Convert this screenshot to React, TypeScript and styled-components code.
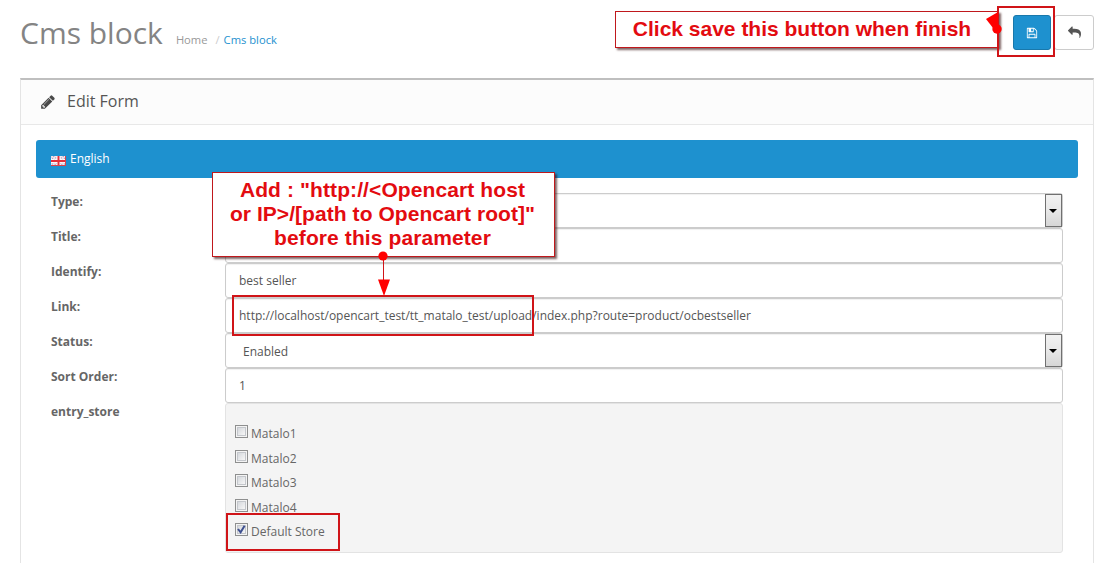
import React from 'react';
import styled, { createGlobalStyle } from 'styled-components';

const GlobalStyle = createGlobalStyle`
  * { box-sizing: border-box; }
  body { margin: 0; overflow: hidden; background: #fff; }
`;

const Page = styled.div`
  position: relative;
  height: 563px;
  overflow: hidden;
  padding: 0 9px 0 20px;
  font: 12px/17px 'Open Sans', sans-serif;
  color: #666;
`;

const PageHeader = styled.header`
  display: flex;
  align-items: flex-start;
  justify-content: space-between;
  height: 78px;
`;

const Heading = styled.div`
  display: flex;
  align-items: baseline;
  padding-top: 13px;
`;

const Title = styled.h1`
  margin: 0;
  font-size: 30px;
  line-height: 40px;
  font-weight: 400;
  color: #848484;
`;

const Breadcrumb = styled.nav`
  display: flex;
  margin-left: 13px;
  font-size: 11.2px;
  color: #999;
`;

const Slash = styled.span`
  margin: 0 4px 0 8px;
  color: #ccc;
`;

const Current = styled.span`
  color: #1e91cf;
`;

const Actions = styled.div`
  display: flex;
  gap: 3px;
  padding-top: 15px;
`;

const IconButton = styled.button<{ $primary?: boolean }>`
  display: flex;
  align-items: center;
  justify-content: center;
  width: ${p => (p.$primary ? '38px' : '40px')};
  height: 35px;
  padding: ${p => (p.$primary ? '1px 0 0' : '0')};
  border: 1px solid ${p => (p.$primary ? '#1978ab' : '#ccc')};
  border-radius: 3px;
  background: ${p => (p.$primary ? '#1e91cf' : '#fff')};
  color: ${p => (p.$primary ? '#fff' : '#555')};
`;

const Panel = styled.section`
  height: 500px;
  border: 1px solid #e4e4e4;
  border-top: 2px solid #bfbfbf;
`;

const PanelHeading = styled.div`
  display: flex;
  align-items: center;
  gap: 11px;
  height: 45px;
  padding: 0 0 1px 19px;
  border-bottom: 1px solid #e8e8e8;
  background: #fcfcfc;
  font-size: 16px;
  color: #4a4a4a;
`;

const PanelTitle = styled.h3`
  margin: 0;
  font-size: 16px;
  font-weight: 400;
  color: #555;
`;

const PanelBody = styled.div`
  padding: 15px;
`;

const LanguageTab = styled.div`
  display: flex;
  align-items: center;
  gap: 4px;
  height: 38px;
  margin-bottom: 15px;
  padding: 0 15px 1px;
  border-radius: 3px;
  background: #1e91cf;
  color: #fff;
`;

const Flag = styled.svg`
  flex: none;
  margin-top: 4px;
`;

const Row = styled.div`
  display: grid;
  grid-template-columns: 174px 838px;
  padding-left: 15px;
`;

const Label = styled.label`
  font-weight: 700;
  color: #666;
`;

const Field = styled.div<{ $select?: boolean }>`
  display: flex;
  align-items: center;
  justify-content: space-between;
  height: 35px;
  padding-left: ${p => (p.$select ? '17px' : '13px')};
  border: 1px solid #ccc;
  border-radius: 3px;
  color: #555;
  background: #fff;
  box-shadow: inset 0 1px 1px rgba(0, 0, 0, 0.06);
`;

const Value = styled.span<{ $select?: boolean }>`
  padding-top: ${p => (p.$select ? '2px' : '0')};
`;

const Arrow = styled.span`
  display: flex;
  align-items: center;
  justify-content: center;
  width: 17px;
  height: 33px;
  padding-right: 1px;
  border: 1px solid #707070;
  background: linear-gradient(#f2f2f2, #e8e8e8 50%, #d6d6d6);

  &::after {
    content: '';
    margin-top: 1px;
    border: 4px solid transparent;
    border-top-color: #000;
    border-bottom: 0;
  }
`;

const StoreWell = styled.div`
  height: 150px;
  padding: 17px 9px;
  border: 1px solid #e3e3e3;
  border-radius: 3px;
  background: #f4f4f4;
`;

const Store = styled.div`
  display: flex;
  gap: 3px;
  height: 24.5px;
  padding-top: 4px;
`;

const StoreName = styled.span``;

const Check = styled.span`
  display: flex;
  align-items: center;
  justify-content: center;
  width: 13px;
  height: 13px;
  border: 1px solid #8e8f8f;
  background: linear-gradient(135deg, #cbcfd5, #f6f6f6 80%);
  box-shadow: inset 0 0 0 1px #f4f4f4, inset 0 0 0 2px #c4c7cc;
`;

const Callout = styled.div<{ $x: number; $y: number; $w: number; $h: number; $pad: string }>`
  position: absolute;
  left: ${p => p.$x}px;
  top: ${p => p.$y}px;
  width: ${p => p.$w}px;
  height: ${p => p.$h}px;
  padding: ${p => p.$pad};
  display: flex;
  flex-direction: column;
  align-items: center;
  justify-content: center;
  border: 1px solid #c0181c;
  background: #fff;
  box-shadow: 2px 2px 2px rgba(60, 20, 20, 0.65);
  font: 700 21px/24px 'Liberation Sans', Arial, sans-serif;
  color: #e30b10;
  white-space: nowrap;
`;

const CalloutLine = styled.span<{ $spacing?: number }>`
  display: block;
  letter-spacing: ${p => p.$spacing ?? 0}px;
`;

const Outline = styled.div<{ $x: number; $y: number; $w: number; $h: number }>`
  position: absolute;
  left: ${p => p.$x}px;
  top: ${p => p.$y}px;
  width: ${p => p.$w}px;
  height: ${p => p.$h}px;
  border: 2px solid #d01418;
`;

const Pointer = styled.svg<{ $x: number; $y: number }>`
  position: absolute;
  left: ${p => p.$x}px;
  top: ${p => p.$y}px;
`;

const Glyph = ({ size, d, flip }: { size: number; d: string; flip?: boolean }) => (
  <svg width={size} height={size} viewBox="0 0 1792 1792" fill="currentColor">
    <path d={d} transform={flip ? 'translate(1792 0) scale(-1 1)' : undefined} />
  </svg>
);

const PENCIL =
  'M491 1536l91-91-235-235-91 91v107h128v128h107zm523-928q0-22-22-22-10 0-17 7l-542 542q-7 7-7 17 0 22 22 22 10 0 17-7l542-542q7-7 7-17zm-54-192l416 416-832 832h-416v-416zm683 96q0 53-37 90l-166 166-416-416 166-165q36-38 90-38 53 0 91 38l235 234q37 39 37 91z';
const FLOPPY =
  'M512 1536h768v-384h-768v384zm896 0h128v-896q0-14-10-38.5t-20-34.5l-281-281q-10-10-34-20t-39-10v416q0 40-28 68t-68 28h-576q-40 0-68-28t-28-68v-416h-128v1280h128v-416q0-40 28-68t68-28h832q40 0 68 28t28 68v416zm-384-928v-320q0-13-9.5-22.5t-22.5-9.5h-192q-13 0-22.5 9.5t-9.5 22.5v320q0 13 9.5 22.5t22.5 9.5h192q13 0 22.5-9.5t9.5-22.5zm640 32v928q0 40-28 68t-68 28h-1344q-40 0-68-28t-28-68v-1344q0-40 28-68t68-28h928q40 0 88 20t76 48l280 280q28 28 48 76t20 88z';
const SHARE =
  'M1792 640q0 26-19 45l-512 512q-19 19-45 19t-45-19-19-45v-256h-224q-98 0-175.5 6t-154 21.5-133 42.5-105.5 69.5-80 101-48.5 138.5-17.5 181q0 55 5 123 0 6 2.5 23.5t2.5 26.5q0 15-8.5 25t-23.5 10q-16 0-28-17-7-9-13-22t-13.5-30-10.5-24q-127-285-127-451 0-199 53-333 162-403 875-403h224v-256q0-26 19-45t45-19 45 19l512 512q19 19 19 45z';

const fields = [
  { label: 'Type:', value: '', select: true },
  { label: 'Title:', value: '' },
  { label: 'Identify:', value: 'best seller' },
  { label: 'Link:', value: 'http://localhost/opencart_test/tt_matalo_test/upload/index.php?route=product/ocbestseller' },
  { label: 'Status:', value: 'Enabled', select: true },
  { label: 'Sort Order:', value: '1' },
];

const stores = ['Matalo1', 'Matalo2', 'Matalo3', 'Matalo4', 'Default Store'];

export default function App() {
  return (
    <Page>
      <GlobalStyle />
      <PageHeader>
        <Heading>
          <Title>Cms block</Title>
          <Breadcrumb>
            <span>Home</span>
            <Slash>/</Slash>
            <Current>Cms block</Current>
          </Breadcrumb>
        </Heading>
        <Actions>
          <IconButton $primary aria-label="Save">
            <Glyph size={12} d={FLOPPY} />
          </IconButton>
          <IconButton aria-label="Back">
            <Glyph size={13} d={SHARE} flip />
          </IconButton>
        </Actions>
      </PageHeader>

      <Panel>
        <PanelHeading>
          <Glyph size={16} d={PENCIL} />
          <PanelTitle>Edit Form</PanelTitle>
        </PanelHeading>
        <PanelBody>
          <LanguageTab>
            <Flag width="15" height="10" viewBox="0 0 15 10">
              <rect width="15" height="10" fill="#f6e6ea" />
              <path d="M0 0L15 10M15 0L0 10" stroke="#8d8fc0" strokeWidth="3" strokeDasharray="1 1.2" />
              <path d="M0 0L15 10M15 0L0 10" stroke="#fbe9ec" strokeWidth="1" />
              <path d="M7.5 0V10M0 5H15" stroke="#fff" strokeWidth="3.6" />
              <path d="M7.5 0V10M0 5H15" stroke="#e5303a" strokeWidth="2" />
              <path d="M0 9.5H15M14.5 0V10" stroke="#d9444d" strokeWidth="1" />
            </Flag>
            <span>English</span>
          </LanguageTab>
          {fields.map(f => (
            <Row key={f.label}>
              <Label>{f.label}</Label>
              <Field $select={f.select}>
                <Value $select={f.select}>{f.value}</Value>
                {f.select && <Arrow />}
              </Field>
            </Row>
          ))}
          <Row>
            <Label>entry_store</Label>
            <StoreWell>
              {stores.map(name => (
                <Store key={name}>
                  <Check>
                    {name === 'Default Store' && (
                      <svg width="9" height="9" viewBox="0 0 9 9" fill="none">
                        <path d="M1 4L3.6 7.3L7.6 0.8" stroke="#3d4f8f" strokeWidth="2" />
                      </svg>
                    )}
                  </Check>
                  <StoreName>{name}</StoreName>
                </Store>
              ))}
            </StoreWell>
          </Row>
        </PanelBody>
      </Panel>

      <Callout $x={615} $y={11} $w={384} $h={37} $pad="0 10px 2px 0">
        <CalloutLine>Click save this button when finish</CalloutLine>
      </Callout>
      <Outline $x={997} $y={6} $w={58} $h={51} />
      <Pointer $x={984} $y={10} width="20" height="26" viewBox="0 0 20 26">
        <path d="M2 9L14 2V16L9 18Z" fill="#f00" />
        <circle cx="13" cy="19" r="4.7" fill="#f00" />
      </Pointer>

      <Callout $x={212} $y={172} $w={343} $h={85} $pad="0 2px 2px 0">
        <CalloutLine $spacing={0.1}>Add : "http://&lt;Opencart host</CalloutLine>
        <CalloutLine $spacing={0.06}>or IP&gt;/[path to Opencart root]"</CalloutLine>
        <CalloutLine $spacing={0.1}>before this parameter</CalloutLine>
      </Callout>
      <Outline $x={232} $y={295} $w={302} $h={41} />
      <Pointer $x={376} $y={250} width="16" height="46" viewBox="0 0 16 46">
        <path d="M7.5 6V30" stroke="#d01418" strokeWidth="1" />
        <circle cx="7" cy="6" r="4.6" fill="#f00" />
        <path d="M2 29.5H14L8 46Z" fill="#f00" />
      </Pointer>
      <Outline $x={226} $y={513} $w={114} $h={38} />
    </Page>
  );
}
